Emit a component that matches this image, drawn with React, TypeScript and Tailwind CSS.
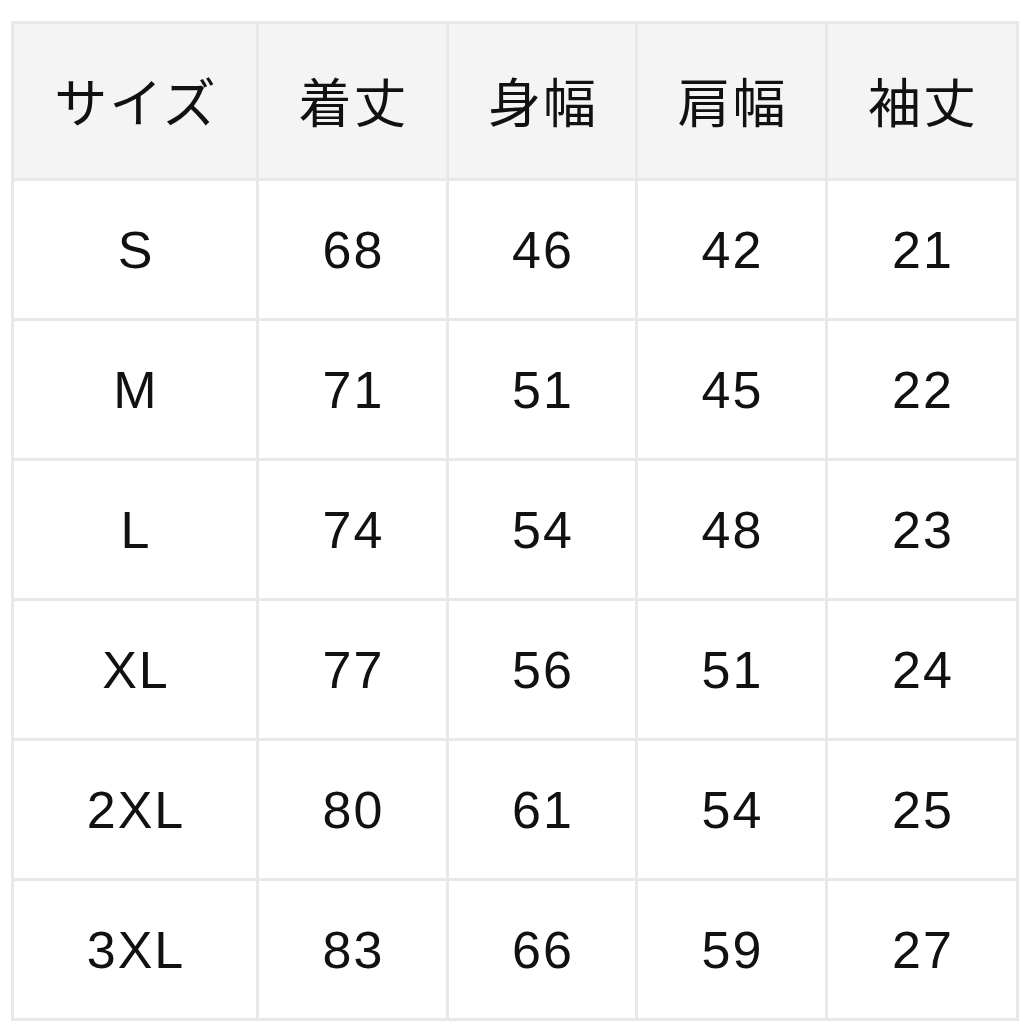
const headers = ["サイズ", "着丈", "身幅", "肩幅", "袖丈"];

const rows: [string, number, number, number, number][] = [
  ["S", 68, 46, 42, 21],
  ["M", 71, 51, 45, 22],
  ["L", 74, 54, 48, 23],
  ["XL", 77, 56, 51, 24],
  ["2XL", 80, 61, 54, 25],
  ["3XL", 83, 66, 59, 27],
];

export default function App() {
  return (
    <div className="min-h-screen w-[1024px] bg-white pl-[11px] pt-[21px]">
      <table
        className="w-[1005px] table-fixed border-collapse text-[#111111]"
        style={{ fontFamily: '"Liberation Sans", "Noto Sans CJK JP", sans-serif' }}
      >
        <colgroup>
          <col className="w-[245px]" />
          <col className="w-[190px]" />
          <col className="w-[189px]" />
          <col className="w-[190px]" />
          <col className="w-[191px]" />
        </colgroup>
        <thead>
          <tr className="h-[157px] bg-[#f4f4f4]">
            {headers.map((h) => (
              <th
                key={h}
                className="border-[3px] border-[#e8e8e8] p-0 pt-[8px] pl-[2px] text-center text-[53px] font-normal tracking-[2px]"
              >
                {h}
              </th>
            ))}
          </tr>
        </thead>
        <tbody>
          {rows.map((row) => (
            <tr key={row[0]} className="h-[140px]">
              {row.map((cell, i) => (
                <td
                  key={i}
                  className="border-[3px] border-[#e8e8e8] p-0 pl-[2px] text-center text-[52px] tracking-[2px]"
                >
                  {cell}
                </td>
              ))}
            </tr>
          ))}
        </tbody>
      </table>
    </div>
  );
}
